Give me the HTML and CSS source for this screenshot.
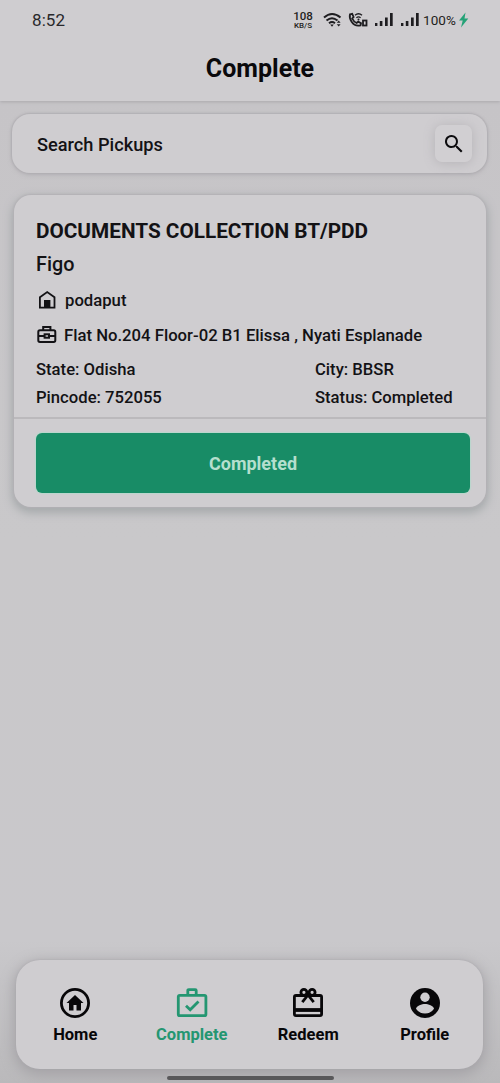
FILE: index.html
```html
<!DOCTYPE html>
<html lang="en">
<head>
<meta charset="utf-8">
<title>Complete</title>
<link rel="stylesheet" href="styles.css">
</head>
<body>
<div class="screen">
  <header class="header">
    <div class="status-bar">
      <span class="clock">8:52</span>
      <div class="indicators">
        <span class="speed"><b>108</b><small>KB/S</small></span>
        <svg class="wifi" width="19" height="16" viewBox="0 0 19 16" fill="none" stroke="#1e1d20" stroke-width="2"><path d="M1 5.500Q9 -1.500 17.500 5.500M3.500 8.500Q9 4 14.500 8.500M6 11.200Q9 9 12 11.200"/><path d="M7.200 12.600h3.600L9 14.800z" fill="#1e1d20" stroke="none"/><path d="M13.800 10.800l1.900-2.200 1.900 2.200zM13.800 12.200l1.900 2.200 1.900-2.200z" fill="#1e1d20" stroke="none"/></svg>
        <svg class="call" width="20" height="16" viewBox="0 0 20 16" fill="none" stroke="#1e1d20" stroke-width="1.800"><path d="M2 2.300L4.200 1.800 5.600 5 4.200 6.500Q5.600 9.600 8.600 11L10.200 9.700 13 11.200 12.500 13.400Q7 14.800 3.600 9.800 1 6 2 2.300z"/><path d="M7 3.300Q10.500 .3 14 3.300M8.400 5.700Q10.500 4 12.600 5.700" stroke-width="1.400"/><circle cx="10.500" cy="7.500" r="1" fill="#1e1d20" stroke="none"/><rect x="15" y="8.500" width="3.500" height="5"/></svg>
        <svg class="signal" width="20" height="16" viewBox="0 0 20 16" fill="#1e1d20"><path d="M1 11h2.400v3H1zM5.800 9h2.600v5H5.800zM11 5.500h2.700V14H11zM16 1h2.700v13H16z"/></svg>
        <svg class="signal second" width="20" height="16" viewBox="0 0 20 16" fill="#1e1d20"><path d="M1 11h2.400v3H1zM5.800 9h2.600v5H5.800zM11 5.500h2.700V14H11zM16 1h2.700v13H16z"/></svg>
        <span class="battery">100%</span>
        <svg width="11" height="16" viewBox="0 0 11 16" fill="#25a277"><path d="M7.500 .5L1 8.500h3.700L3 15.500 10.300 6.600H6.500z"/></svg>
      </div>
    </div>
    <h1 class="title">Complete</h1>
  </header>
  <main class="content">
    <div class="search">
      <span>Search Pickups</span>
      <button class="search-button" aria-label="Search"><svg width="24" height="24" viewBox="0 0 24 24" fill="#0c0b0e"><path d="M15.500 14h-.8l-.3-.3A6.500 6.500 0 1 0 13.700 14.400l.3.3v.8l5 5 1.500-1.500zM9.500 14a4.500 4.500 0 1 1 0-9 4.500 4.500 0 0 1 0 9z"/></svg></button>
    </div>
    <article class="card">
      <div class="details">
        <h2 class="card-title">DOCUMENTS COLLECTION BT/PDD</h2>
        <p class="name">Figo</p>
        <p class="line place"><svg width="22" height="22" viewBox="0 0 22 22" fill="none" stroke="#131215" stroke-width="1.800"><path d="M3.900 8.200L11.200 3l7.300 5.200v10.400H3.900z"/><path d="M8 11h6.400v7.600H8z" fill="#131215" stroke="none"/></svg><span>podaput</span></p>
        <p class="line address"><svg width="22" height="22" viewBox="0 0 22 22" fill="none" stroke="#131215" stroke-width="2"><rect x="2.300" y="6.300" width="17" height="11.600" rx="1.600"/><path d="M7.200 6V3h7.200v3M2.300 12h6M13.300 12h6"/><rect x="8.600" y="10.300" width="4.400" height="3.400"/></svg><span>Flat No.204 Floor-02 B1 Elissa , Nyati Esplanade</span></p>
        <div class="facts">
          <span>State: Odisha</span><span>City: BBSR</span>
          <span>Pincode: 752055</span><span>Status: Completed</span>
        </div>
      </div>
      <div class="action"><button class="done">Completed</button></div>
    </article>
  </main>
  <nav class="tabs">
    <a class="tab"><svg width="32" height="32" viewBox="0 0 32 32"><circle cx="16" cy="16" r="13.600" fill="none" stroke="currentColor" stroke-width="2.800"/><path d="M16 8l-8.500 8H10v7.500h4.500V18h3v5.500H22V16h2.500z" fill="currentColor"/></svg><span>Home</span></a>
    <a class="tab active"><svg width="32" height="32" viewBox="0 0 32 32" fill="none" stroke="currentColor" stroke-width="2.800"><rect x="2.300" y="8.300" width="27.600" height="20.400" rx="1.500"/><path d="M11.800 8V3.600q0-1 1-1h6.400q1 0 1 1V8M10 18.700l4.200 4 8.300-8.300"/></svg><span>Complete</span></a>
    <a class="tab"><svg width="32" height="32" viewBox="0 0 32 32" fill="none" stroke="currentColor" stroke-width="2.800"><rect x="2.400" y="8.500" width="27.200" height="20.200" rx="1.600"/><path d="M2 23h28" stroke-width="3.800"/><path d="M16 8l-5.700 7.200M16 8l5.700 7.200"/><circle cx="11.900" cy="5.300" r="3"/><circle cx="20.100" cy="5.300" r="3"/></svg><span>Redeem</span></a>
    <a class="tab"><svg width="32" height="32" viewBox="0 0 32 32"><circle cx="16" cy="16" r="15" fill="currentColor"/><circle cx="16" cy="10.200" r="4.700" fill="#cfcdd0"/><path d="M7 21.700c.3-3 6-4.800 9-4.800s8.700 1.800 9 4.800a10.800 10.800 0 0 1-18 0z" fill="#cfcdd0"/></svg><span>Profile</span></a>
  </nav>
  <div class="home-indicator"></div>
</div>
</body>
</html>
```
FILE: styles.css
```css
* { box-sizing: border-box; }
body { margin: 0; font-family: Roboto, "Noto Sans", sans-serif; color: #131215; }
h1, h2, p { margin: 0; }
button { border: 0; padding: 0; font: inherit; }
svg { display: block; flex: none; }
.screen { height: 1083px; background: linear-gradient(#c6c4c7 100px, #c9c8ca 540px, #c9c8cb 940px, #bab9bb); display: flex; flex-direction: column; overflow: hidden; }
.header { height: 101px; flex: none; background: #cfcdd0; box-shadow: 0 1px 3px #aaa8ac; }
.status-bar { height: 40px; padding: 0 31px 0 32px; display: flex; align-items: center; justify-content: space-between; }
.clock { font-size: 17px; line-height: 20px; letter-spacing: .1px; color: #29282b; }
.indicators { display: flex; align-items: center; color: #1e1d20; }
.speed { display: flex; flex-direction: column; align-items: center; width: 20px; margin-right: 10px; }
.speed b { font-size: 11.5px; line-height: 11px; font-weight: 500; }
.speed small { font-size: 8px; line-height: 8px; font-weight: 500; }
.wifi { margin-right: 6px; }
.call { margin-right: 6px; }
.second { margin-left: 6px; margin-right: 3px; }
.battery { font-size: 13.5px; line-height: 18px; width: 34px; margin-right: 1px; letter-spacing: .1px; font-weight: 400; }
.title { text-align: center; font-size: 25px; line-height: 30px; padding: 14px 0 0 20px; font-weight: 700; color: #0a090c; }
.content { flex: 1; padding: 13px 13px 0 12px; }
.search { height: 59px; border-radius: 18px; background: #cfcdd0; display: flex; align-items: center; justify-content: space-between; padding: 0 15px 0 25px; font-size: 18.2px; font-weight: 500; box-shadow: 0 0 2px 1px #b0aeb2, 0 2px 5px #b4b2b6; }
.search > span { padding-top: 2px; }
.search-button { width: 37px; height: 37px; border-radius: 7px; background: #d1cfd2; display: grid; place-items: center; box-shadow: 0 1px 12px #b5b3b7; }
.card { margin: 22px 1px 0 2px; height: 312px; border-radius: 17px; background: #cfcdd0; box-shadow: 0 0 2px 1px #b3b1b5, 0 4px 10px 2px #a5a9ab; }
.details { height: 224px; border-bottom: 2px solid #bbb9bc; padding: 23px 16px 0 22px; }
.card-title { font-size: 20.75px; line-height: 26px; font-weight: 700; white-space: nowrap; }
.name { font-size: 19.8px; line-height: 26px; font-weight: 500; margin-top: 8px; }
.line { display: flex; align-items: center; height: 24px; font-size: 16.7px; font-weight: 500; white-space: nowrap; }
.place { gap: 7px; margin-top: 10px; }
.address { gap: 6px; margin-top: 11px; }
.facts { display: grid; grid-template-columns: 279px 1fr; grid-auto-rows: 28px; align-items: center; margin-top: 8px; font-size: 16.65px; font-weight: 500; white-space: nowrap; }
.action { padding: 14px 16px 0 22px; }
.done { display: block; width: 100%; height: 60px; border-radius: 6px; background: #188c66; color: #b5dfce; font-size: 18px; font-weight: 700; box-shadow: 0 0 1px 1px #b9d8cc; }
.tabs { flex: none; height: 109px; margin: 0 17px 7px 16px; padding: 27px 0 0 1px; border-radius: 24px; background: #cfcdd0; display: grid; grid-template-columns: repeat(4, 1fr); box-shadow: 0 0 2px #a9a7ab, 0 4px 14px 2px #a4a2a6; }
.tab { display: flex; flex-direction: column; align-items: center; gap: 5px; font-size: 16.5px; line-height: 21px; font-weight: 700; color: #080709; }
.active { color: #249671; }
.home-indicator { flex: none; width: 167px; height: 4px; border-radius: 2px; background: #59585a; margin: 0 auto 3px; }
```
